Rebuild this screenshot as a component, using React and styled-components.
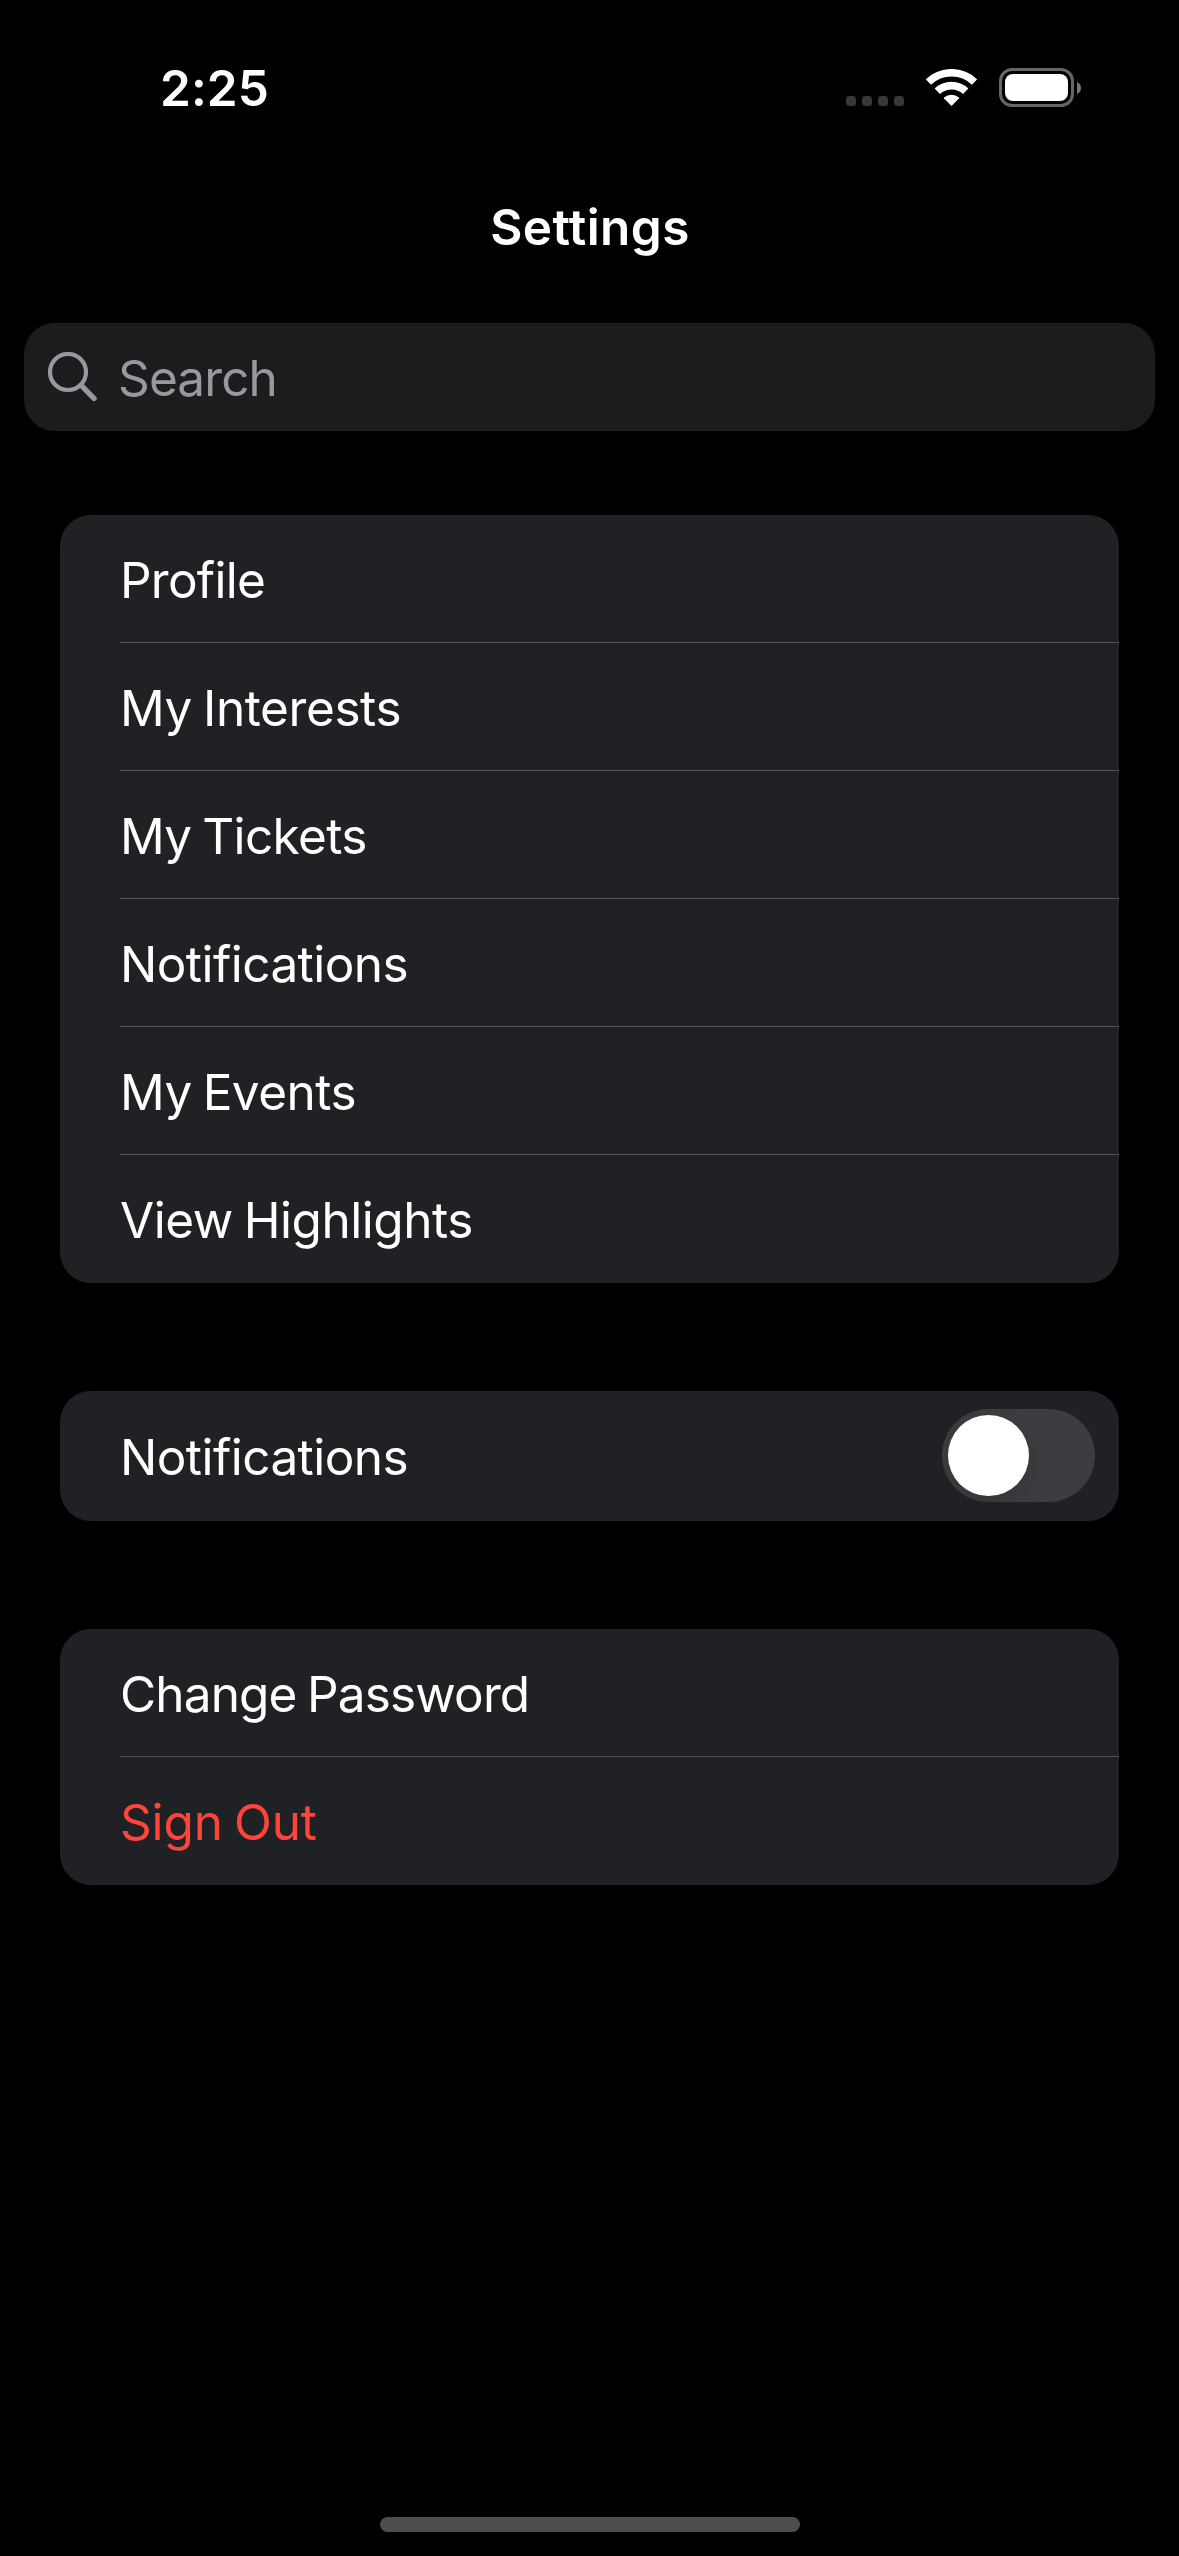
import React, { useState } from 'react';
import styled, { createGlobalStyle } from 'styled-components';

const Global = createGlobalStyle`
  * { box-sizing: border-box; }
  html, body { margin: 0; background: #000; }
`;

const Screen = styled.div`
  width: 1179px;
  height: 2556px;
  display: flex;
  flex-direction: column;
  overflow: hidden;
  background: #000;
  color: #fff;
  font-family: Inter, 'Liberation Sans', sans-serif;
  font-size: 49.5px;
  line-height: 60px;
  font-kerning: normal;
  -webkit-font-smoothing: antialiased;
`;

const StatusBar = styled.header`
  height: 177px;
  padding: 58px 98px 0 160px;
  display: flex;
  align-items: flex-start;
  justify-content: space-between;
`;

const Clock = styled.time`
  font-weight: 600;
  letter-spacing: 0.1px;
`;

const StatusIcons = styled.div`
  display: flex;
  align-items: center;
  gap: 22px;
  height: 39px;
  margin-top: 10px;
`;

const SignalDots = styled.div`
  display: flex;
  gap: 6px;
  align-self: flex-end;
  margin-bottom: 1px;
`;

const Dot = styled.span`
  width: 10px;
  height: 10px;
  border-radius: 3.5px;
  background: #373737;
`;

const Battery = styled.div`
  display: flex;
  align-items: center;
  gap: 3px;
`;

const BatteryShell = styled.div`
  width: 75px;
  height: 39px;
  padding: 3px;
  border: 3px solid #666;
  border-radius: 13px;
`;

const BatteryCharge = styled.div`
  height: 100%;
  border-radius: 8px;
  background: #fff;
`;

const TitleBar = styled.div`
  height: 146px;
  padding: 20px 0 0 1px;
  text-align: center;
`;

const Title = styled.h1`
  margin: 0;
  font-size: inherit;
  font-weight: 600;
  letter-spacing: 0.4px;
`;

const SearchField = styled.label`
  height: 108px;
  margin: 0 24px;
  padding: 0 24px;
  display: flex;
  align-items: center;
  gap: 21px;
  border-radius: 31px;
  background: #1c1c1e;
  color: #98989f;
`;

const Placeholder = styled.span`
  padding-top: 2px;
  letter-spacing: -0.88px;
`;

const Groups = styled.main`
  flex: 1;
  padding: 84px 60px 0;
  display: flex;
  flex-direction: column;
  gap: 108px;
`;

const Card = styled.section`
  padding-left: 60px;
  border-radius: 31px;
  background: #202124;
`;

const Row = styled.div`
  height: ${(p) => p.$height || 128}px;
  padding-right: 24px;
  display: flex;
  align-items: center;
  justify-content: space-between;
  border-bottom: 1px solid #545456;
  color: ${(p) => (p.$danger ? '#ff453a' : '#fff')};

  &:last-child {
    border-bottom-color: transparent;
  }
`;

const Label = styled.span`
  padding-top: 3px;
  letter-spacing: ${(p) => p.$tracking}px;
  word-spacing: -2.5px;
`;

const Switch = styled.button`
  width: 153px;
  height: 93px;
  padding: 6px;
  border: 0;
  border-radius: 47px;
  display: flex;
  overflow: hidden;
  justify-content: ${(p) => (p.$on ? 'flex-end' : 'flex-start')};
  background: ${(p) => (p.$on ? '#30d158' : '#3d3d41')};
`;

const Knob = styled.span`
  width: 81px;
  height: 81px;
  border-radius: 50%;
  background: #fff;
  box-shadow: 0 9px 24px rgba(0, 0, 0, 0.12);
`;

const HomeArea = styled.footer`
  height: 39px;
  padding-left: 1px;
  display: flex;
  justify-content: center;
`;

const HomeIndicator = styled.div`
  width: 420px;
  height: 15px;
  border-radius: 8px;
  background: #4d4d4d;
`;

const mainRows = [
  { text: 'Profile', tracking: -0.75 },
  { text: 'My Interests', tracking: -0.4 },
  { text: 'My Tickets', tracking: -0.64 },
  { text: 'Notifications', tracking: -0.55 },
  { text: 'My Events', tracking: -0.52 },
  { text: 'View Highlights', tracking: -0.46 },
];

const accountRows = [
  { text: 'Change Password', tracking: -0.86 },
  { text: 'Sign Out', tracking: -0.15, danger: true },
];

function WifiIcon() {
  return (
    <svg width="51" height="37" viewBox="0 0 51 37" fill="none">
      <path d="M2.4 13.1A33.2 33.2 0 0 1 48.6 13.1" stroke="#fff" strokeWidth="7.6" />
      <path d="M11.3 22.3A20.5 20.5 0 0 1 39.7 22.3" stroke="#fff" strokeWidth="7.6" />
      <path d="M25.5 37L17.9 29.3Q17.7 29 18 28.6A11.3 11.3 0 0 1 33 28.6Q33.3 29 33.1 29.3Z" fill="#fff" />
    </svg>
  );
}

function SearchIcon() {
  return (
    <svg width="49" height="50" viewBox="0 0 49 50" fill="none" stroke="#98989f">
      <circle cx="20" cy="20" r="18" strokeWidth="4.2" />
      <path d="M33 33.2L46 46.4" strokeWidth="5.4" strokeLinecap="round" />
    </svg>
  );
}

function RowList({ rows }) {
  return (
    <Card>
      {rows.map((row) => (
        <Row key={row.text} $danger={row.danger}>
          <Label $tracking={row.tracking}>{row.text}</Label>
        </Row>
      ))}
    </Card>
  );
}

export default function App() {
  const [on, setOn] = useState(false);
  return (
    <Screen>
      <Global />
      <StatusBar>
        <Clock>2:25</Clock>
        <StatusIcons>
          <SignalDots>
            <Dot />
            <Dot />
            <Dot />
            <Dot />
          </SignalDots>
          <WifiIcon />
          <Battery>
            <BatteryShell>
              <BatteryCharge />
            </BatteryShell>
            <svg width="4" height="12" viewBox="0 0 4 12">
              <path d="M0 0C2.5 1 4 3.3 4 6S2.5 11 0 12Z" fill="#777" />
            </svg>
          </Battery>
        </StatusIcons>
      </StatusBar>
      <TitleBar>
        <Title>Settings</Title>
      </TitleBar>
      <SearchField>
        <SearchIcon />
        <Placeholder>Search</Placeholder>
      </SearchField>
      <Groups>
        <RowList rows={mainRows} />
        <Card>
          <Row $height={130}>
            <Label $tracking={-0.55}>Notifications</Label>
            <Switch type="button" role="switch" aria-checked={on} $on={on} onClick={() => setOn(!on)}>
              <Knob />
            </Switch>
          </Row>
        </Card>
        <RowList rows={accountRows} />
      </Groups>
      <HomeArea>
        <HomeIndicator />
      </HomeArea>
    </Screen>
  );
}
